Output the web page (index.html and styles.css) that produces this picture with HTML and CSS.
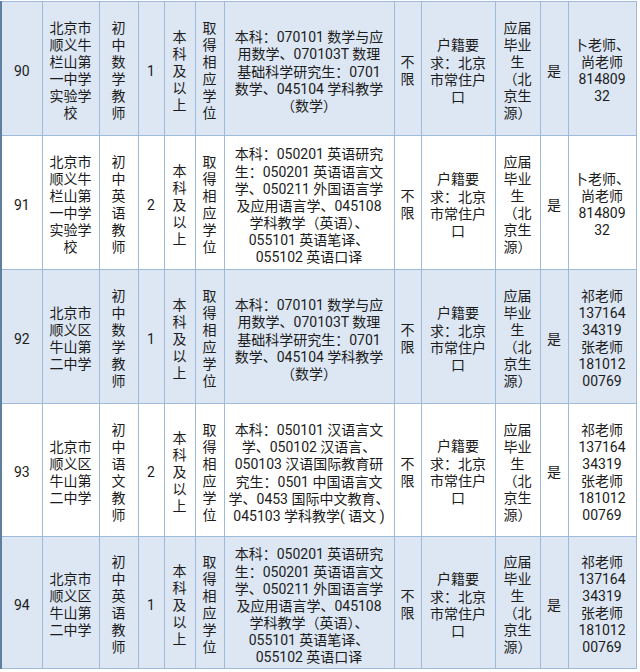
FILE: index.html
```html
<!DOCTYPE html>
<html lang="zh-CN">
<head>
<meta charset="utf-8">
<title>招聘岗位表</title>
<link rel="stylesheet" href="styles.css">
</head>
<body>
<table class="jobs">
<colgroup>
<col class="c1"><col class="c2"><col class="c3"><col class="c4"><col class="c5"><col class="c6"><col class="c7"><col class="c8"><col class="c9"><col class="c10"><col class="c11"><col class="c12">
</colgroup>
<tbody>
<tr class="r blue h1">
<td>90</td>
<td>北京市<br>顺义牛<br>栏山第<br>一中学<br>实验学<br>校</td>
<td>初<br>中<br>数<br>学<br>教<br>师</td>
<td>1</td>
<td>本<br>科<br>及<br>以<br>上</td>
<td>取<br>得<br>相<br>应<br>学<br>位</td>
<td>本科<span class="cl">：</span>070101 数学与应<br>用数学、070103T 数理<br>基础科学研究生<span class="cl">：</span>0701<br>数学、045104 学科教学<br>（数学）</td>
<td>不<br>限</td>
<td>户籍要<br>求<span class="cl">：</span>北京<br>市常住户<br>口</td>
<td>应届<br>毕业<br>生<br>（北<br>京生<br>源）</td>
<td>是</td>
<td>卜老师、<br>尚老师<br>814809<br>32</td>
</tr>
<tr class="r white h2">
<td>91</td>
<td>北京市<br>顺义牛<br>栏山第<br>一中学<br>实验学<br>校</td>
<td>初<br>中<br>英<br>语<br>教<br>师</td>
<td>2</td>
<td>本<br>科<br>及<br>以<br>上</td>
<td>取<br>得<br>相<br>应<br>学<br>位</td>
<td>本科<span class="cl">：</span>050201 英语研究<br>生<span class="cl">：</span>050201 英语语言文<br>学、050211 外国语言学<br>及应用语言学、045108<br>学科教学（英语）、<br>055101 英语笔译、<br>055102 英语口译</td>
<td>不<br>限</td>
<td>户籍要<br>求<span class="cl">：</span>北京<br>市常住户<br>口</td>
<td>应届<br>毕业<br>生<br>（北<br>京生<br>源）</td>
<td>是</td>
<td>卜老师、<br>尚老师<br>814809<br>32</td>
</tr>
<tr class="r blue h3">
<td>92</td>
<td>北京市<br>顺义区<br>牛山第<br>二中学</td>
<td>初<br>中<br>数<br>学<br>教<br>师</td>
<td>1</td>
<td>本<br>科<br>及<br>以<br>上</td>
<td>取<br>得<br>相<br>应<br>学<br>位</td>
<td>本科<span class="cl">：</span>070101 数学与应<br>用数学、070103T 数理<br>基础科学研究生<span class="cl">：</span>0701<br>数学、045104 学科教学<br>（数学）</td>
<td>不<br>限</td>
<td>户籍要<br>求<span class="cl">：</span>北京<br>市常住户<br>口</td>
<td>应届<br>毕业<br>生<br>（北<br>京生<br>源）</td>
<td>是</td>
<td>祁老师<br>137164<br>34319<br>张老师<br>181012<br>00769</td>
</tr>
<tr class="r white h4">
<td>93</td>
<td>北京市<br>顺义区<br>牛山第<br>二中学</td>
<td>初<br>中<br>语<br>文<br>教<br>师</td>
<td>2</td>
<td>本<br>科<br>及<br>以<br>上</td>
<td>取<br>得<br>相<br>应<br>学<br>位</td>
<td>本科<span class="cl">：</span>050101 汉语言文<br>学、050102 汉语言、<br>050103 汉语国际教育研<br>究生<span class="cl">：</span>0501 中国语言文<br>学、0453 国际中文教育、<br>045103 学科教学( 语文 )</td>
<td>不<br>限</td>
<td>户籍要<br>求<span class="cl">：</span>北京<br>市常住户<br>口</td>
<td>应届<br>毕业<br>生<br>（北<br>京生<br>源）</td>
<td>是</td>
<td>祁老师<br>137164<br>34319<br>张老师<br>181012<br>00769</td>
</tr>
<tr class="r blue h5">
<td>94</td>
<td>北京市<br>顺义区<br>牛山第<br>二中学</td>
<td>初<br>中<br>英<br>语<br>教<br>师</td>
<td>1</td>
<td>本<br>科<br>及<br>以<br>上</td>
<td>取<br>得<br>相<br>应<br>学<br>位</td>
<td>本科<span class="cl">：</span>050201 英语研究<br>生<span class="cl">：</span>050201 英语语言文<br>学、050211 外国语言学<br>及应用语言学、045108<br>学科教学（英语）、<br>055101 英语笔译、<br>055102 英语口译</td>
<td>不<br>限</td>
<td>户籍要<br>求<span class="cl">：</span>北京<br>市常住户<br>口</td>
<td>应届<br>毕业<br>生<br>（北<br>京生<br>源）</td>
<td>是</td>
<td>祁老师<br>137164<br>34319<br>张老师<br>181012<br>00769</td>
</tr>
</tbody>
</table>
</body>
</html>
```

FILE: styles.css
```css
html, body {
  margin: 0;
  padding: 0;
  background: #ffffff;
}
body {
  padding-top: 1px;
  font-family: Roboto, "Noto Sans CJK SC", sans-serif;
  color: #1c1c1c;
}
.jobs {
  border-collapse: collapse;
  table-layout: fixed;
  width: 635px;
  border-left: 2px solid #5f7f9f;
}
.jobs td {
  border: 1px solid #9fbad8;
  text-align: center;
  vertical-align: middle;
  font-size: 14px;
  line-height: 17px;
  padding: 5px 0 0 0;
  white-space: nowrap;
  overflow: hidden;
}
.jobs td:first-child {
  border-left: 2px solid #5f7f9f;
}
.cl {
  font-family: "Noto Sans CJK TC", "Noto Sans CJK SC", sans-serif;
}
.blue td { background: #dde7f3; }
.white td { background: #ffffff; }
.h1 { height: 134px; }
.h2 { height: 134px; }
.h3 { height: 134px; }
.h4 { height: 133px; }
.h5 { height: 132px; }
.c1 { width: 41px; }
.c2 { width: 57px; }
.c3 { width: 39px; }
.c4 { width: 26px; }
.c5 { width: 31px; }
.c6 { width: 29px; }
.c7 { width: 170px; }
.c8 { width: 27px; }
.c9 { width: 74px; }
.c10 { width: 45px; }
.c11 { width: 28px; }
.c12 { width: 68px; }
```
